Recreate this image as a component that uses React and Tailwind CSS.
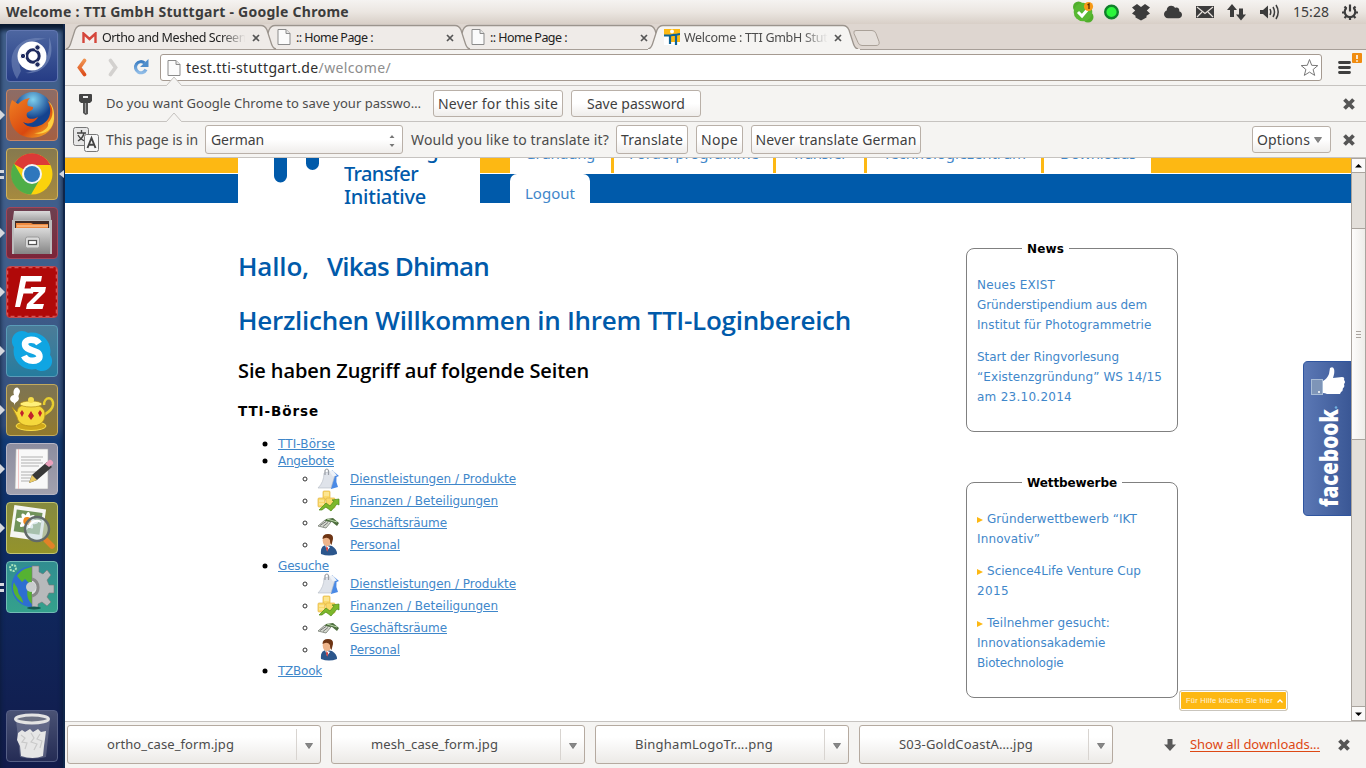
import { useLayoutEffect, useRef, useState } from "react";
import { FaCloud, FaSkype } from "react-icons/fa";

/* Text whose tracking is adjusted so that it fills a slot of the given width. */
function Fit({ w, className = "", children }) {
  const ref = useRef(null);
  const [gap, setGap] = useState(0);
  useLayoutEffect(() => {
    const natural = ref.current.getBoundingClientRect().width;
    const count = ref.current.textContent.length;
    setGap((w - natural) / count);
  }, [w]);
  return (
    <span ref={ref} className={`inline-block whitespace-pre ${className}`} style={{ letterSpacing: `${gap}px` }}>
      {children}
    </span>
  );
}

/* ---------- top panel ---------- */

function TopPanel() {
  return (
    <header className="flex h-6 shrink-0 items-center bg-linear-to-b from-[#f5f3f1] via-[#ebe6e1] to-[#d8cfc7] text-[#3c3c3c]">
      <div className="flex-1 pl-[6px] text-[14px] leading-6 font-bold">
        <Fit w={343}>Welcome : TTI GmbH Stuttgart - Google Chrome</Fit>
      </div>
      <svg width="293" height="24" viewBox="0 0 293 24" className="-mr-[72px] shrink-0">
        <circle cx="6.500" cy="7" r="5.500" fill="#4fae2b" />
        <circle cx="16" cy="17" r="5.500" fill="#4fae2b" />
        <circle cx="11" cy="12" r="9.300" fill="#58b832" />
        <path d="M6 12l4 4 6-7" fill="none" stroke="#fff" strokeWidth="3" />
        <circle cx="16.500" cy="6.500" r="4.600" fill="#f79a16" />
        <path d="M15.500 5l1.500-1v5" fill="none" stroke="#5a2a00" strokeWidth="1.300" />
        <circle cx="39.500" cy="12" r="6.300" fill="#2cf53c" stroke="#10802a" strokeWidth="2.400" />
        <path d="M65 4l4 3 4-3 5 3.500-3.200 3 3.200 3-3.500 2.300v1.700L69 20.500l-5.500-3v-1.700L60 13.500l3.200-3L60 7.500z" fill="#3c3c3c" />
        <g transform="translate(92 3)"><FaCloud size={18} color="#3c3c3c" /></g>
        <rect x="124" y="6" width="18" height="12" fill="#3c3c3c" />
        <path d="M125 7l8 6.500L141 7M125 17l5-5M141 17l-5-5" fill="none" stroke="#e8e2dd" strokeWidth="1.200" />
        <path d="M160 4l5 6h-3v7h-4v-7h-3zM169 20.500l-5-6h3V8.500h4v6h3z" fill="#3c3c3c" />
        <path d="M188 10h3l5-4.500v13L191 14h-3z" fill="#3c3c3c" />
        <path d="M198 9q1.600 3 0 6M201 7q3 5 0 10M204 5q4.400 7 0 14" fill="none" stroke="#3c3c3c" strokeWidth="1.500" />
      </svg>
      <div className="w-[36px] text-[14px] leading-6"><Fit w={36}>15:28</Fit></div>
      <svg width="37" height="24" viewBox="0 0 37 24" className="shrink-0">
        <g fill="none" stroke="#3c3c3c" strokeWidth="2.200">
          <path d="M17.500 7.800a5.300 5.300 0 1 0 7 0M21 4.500v7" />
          <path d="M13 12.500h3M26 12.500h3M15.500 18l2-2M26.500 18l-2-2M21 17v3M15.500 6.500l2 2M26.500 6.500l-2 2" />
        </g>
      </svg>
    </header>
  );
}

/* ---------- launcher ---------- */

function Tile({ className, pips = "", children }) {
  return (
    <div className="flex h-[52px] w-[65px] shrink-0 items-center">
      <svg width="6" height="14" viewBox="0 0 6 14" fill="#d5d8de">
        {pips.includes("one") && <path d="M0 2l5 5-5 5z" />}
        {pips.includes("many") && <path d="M0 3h4v3H0zM0 9h4v3H0z" />}
      </svg>
      <div className={`h-[52px] w-[52px] overflow-hidden rounded-[4px] border ${className}`}>
        <svg width="50" height="50" viewBox="0 0 50 50">{children}</svg>
      </div>
      <svg width="7" height="14" viewBox="0 0 7 14" fill="#d5d8de">
        {pips.includes("active") && <path d="M6 3L1 7l5 4z" />}
      </svg>
    </div>
  );
}

function Launcher() {
  return (
    <nav className="flex w-[65px] shrink-0 flex-col gap-[7px] border-r-2 border-[#10264a] bg-[linear-gradient(to_bottom,#405f8b_0%,#405e8b_35%,#334e7c_54%,#123a74_56%,#0e2c63_68%,#121b4b_100%)] pt-[6px] pb-[6px] shadow-[inset_0_6px_5px_#0a1a30]">
      <Tile className="border-[#6176b0] bg-linear-to-b from-[#4d66a0] to-[#263c85]">
        <path d="M10 48C-4 26 10 2 40 8C20 8 8 22 14 40z" fill="#7d91bf" opacity=".5" />
        <path d="M42 6c8 20-4 38-24 36c16-2 26-14 24-36z" fill="#8b9fca" opacity=".5" />
        <circle cx="25" cy="25" r="14.500" fill="#fff" />
        <circle cx="26" cy="25" r="6.200" fill="none" stroke="#1f2b5f" strokeWidth="3" />
        <g fill="#1f2b5f" stroke="#fff" strokeWidth="1">
          <circle cx="16" cy="25" r="2.700" /><circle cx="30.500" cy="16.500" r="2.700" /><circle cx="30.500" cy="33.500" r="2.700" />
        </g>
      </Tile>
      <Tile pips="one" className="border-[#c98665] bg-linear-to-b from-[#8c6c66] to-[#a45f42]">
        <defs>
          <radialGradient id="ffGlobe" cx=".5" cy=".2"><stop offset="0" stopColor="#7fd0ee" /><stop offset="1" stopColor="#14428e" /></radialGradient>
          <linearGradient id="ffFur" x1="0" y1="0" x2="1" y2="1"><stop offset="0" stopColor="#f08022" /><stop offset=".6" stopColor="#d9480f" /><stop offset="1" stopColor="#fbc52c" /></linearGradient>
        </defs>
        <circle cx="26" cy="21" r="19" fill="url(#ffGlobe)" />
        <path d="M5 10l6 4c3-3 6-5 12-6c-3 3-3 6-2 8l5 1c1 3-4 4-6 6c-2 5 4 8 11 4c-3 6-10 8-15 5c4 7 18 7 25-3c4-6 2-15-1-19c9 8 10 23 2 31c-9 9-26 9-34-1C1 32 1 19 5 10z" fill="url(#ffFur)" />
        <path d="M41 11c6 7 6 16 0 22c2 5-8 11-14 10c12 3 21-5 20-18c0-6-2-11-6-14z" fill="#fdcf41" />
      </Tile>
      <Tile pips="many active" className="border-[#d0b15c] bg-linear-to-b from-[#86794e] to-[#a68a3e]">
        <circle cx="25" cy="25" r="20.500" fill="#fbd20c" />
        <path d="M25 25L7 15A20.500 20.500 0 0 1 43.500 16H25z" fill="#dc3a37" />
        <path d="M7 14.500A20.500 20.500 0 0 0 24 45.500l9-15.500H16z" fill="#4fae47" />
        <circle cx="25" cy="25" r="10" fill="#f3f5f6" />
        <circle cx="25" cy="25" r="8" fill="#2e77bd" />
      </Tile>
      <Tile pips="one" className="border-[#a2465a] bg-linear-to-b from-[#6d4050] to-[#7c2439]">
        <defs><linearGradient id="steel" x1="0" y1="0" x2="0" y2="1"><stop offset="0" stopColor="#dadada" /><stop offset="1" stopColor="#858585" /></linearGradient></defs>
        <path d="M7 3h36l2 15H5z" fill="url(#steel)" />
        <path d="M5 12h40v34H5z" fill="#bcbcbc" />
        <path d="M8 13h34v8H8z" fill="#422b24" />
        <path d="M9 15h15l2 1h15v5H9z" fill="#f08b40" />
        <path d="M10 18h31" stroke="#ffd9b2" />
        <path d="M7 20h36v26H7z" fill="url(#steel)" />
        <rect x="18.500" y="29" width="14" height="11" rx="2" fill="#dadada" stroke="#999" />
        <rect x="21.500" y="32.500" width="8" height="4" fill="#fff" stroke="#555" strokeWidth="1.200" />
      </Tile>
      <Tile pips="one" className="border-[#c24b51] bg-[#b00909]">
        <rect x=".5" y=".5" width="49" height="49" fill="none" stroke="#d45555" strokeWidth="1.500" strokeDasharray="4 3" />
        <path d="M14 9h21l-1 5.500H19l-1.500 7H27l-1 5h-9.500L13 40H8z" fill="#fff" />
        <path d="M24 20h15l-1 5-12 12h11l-1.500 5H19l1-5 12-12h-9z" fill="#fff" />
      </Tile>
      <Tile pips="one" className="border-[#5a9cb8] bg-linear-to-b from-[#4b7c98] to-[#247c9e]">
        <g transform="translate(2 2)"><FaSkype size={46} color="#10a5e2" /></g>
        <circle cx="25" cy="25" r="16" fill="#10a5e2" />
        <path d="M32 17.500c-3-5-14-5-14 .5c0 8 14.500 5 14.500 12.500c0 5.500-12.500 6-15.500-.5" fill="none" stroke="#fff" strokeWidth="6.500" />
      </Tile>
      <Tile pips="one" className="border-[#c2aa5e] bg-linear-to-b from-[#7d7452] to-[#91792c]">
        <path d="M7 18c-7-3-3-8 0-8c-2-6 3-10 5-6c3 3-2 6 0 9c0 4-5 4-5 8z" fill="#fff" />
        <path d="M37 20c0-9 10-9 9 0c-1 7-9 9-12 12" fill="none" stroke="#e6cd30" strokeWidth="2.500" />
        <ellipse cx="24" cy="41" rx="15" ry="4.500" fill="#d0a81b" stroke="#fae04a" />
        <path d="M5 22l5 5c1-6 4-7 14-8c10 1 14 5 14 10c0 9-6 12-14 12s-13-3-14-9z" fill="#f5d83c" stroke="#b18c18" strokeWidth=".8" />
        <ellipse cx="24" cy="19" rx="11" ry="3" fill="#fff07a" stroke="#b18c18" strokeWidth=".7" />
        <circle cx="24" cy="15" r="3" fill="#f5dc4b" />
        <path d="M15 25l2 3-2 4-2-4zM24 26l3 5-3 4-3-4zM33 25l2 3-2 4-2-4z" fill="#c2202c" />
      </Tile>
      <Tile pips="one" className="border-[#b7b6c5] bg-linear-to-b from-[#8c8d9f] to-[#a2a1ae]">
        <path d="M9 5h32v40H8z" fill="#f8f8f8" stroke="#aaa" strokeWidth=".6" />
        <path d="M11.500 5v40" stroke="#f2b1b1" strokeWidth=".7" />
        <path d="M14 13h22M14 16h20M14 19h22M14 22h18M14 28h15M14 31h12M14 34h10M14 37h9" stroke="#b0b0b0" strokeWidth="1" />
        <path d="M22 39l3-8 15-13 5 5-15 13z" fill="#383838" />
        <path d="M22 39l3-8 5 5z" fill="#e8c863" />
        <path d="M38 20l4-4c2-1 5 2 4 4l-4 3z" fill="#e9a0bc" />
      </Tile>
      <Tile pips="one" className="border-[#c3c471] bg-linear-to-b from-[#858a3f] to-[#94932a]">
        <g transform="rotate(8 20 20)">
          <rect x="5" y="4" width="32" height="32" fill="#f6f6f2" />
          <rect x="8" y="8" width="26" height="22" fill="#71935a" />
          <g fill="#fff"><ellipse cx="20" cy="18" rx="11" ry="3" /><ellipse cx="20" cy="18" rx="3" ry="9" /><ellipse cx="20" cy="18" rx="3" ry="9" transform="rotate(45 20 18)" /><ellipse cx="20" cy="18" rx="3" ry="9" transform="rotate(-45 20 18)" /></g>
          <circle cx="20" cy="18" r="4" fill="#f08a1d" />
        </g>
        <path d="M39 37l6 6" stroke="#e28227" strokeWidth="5.500" strokeLinecap="round" />
        <circle cx="30" cy="26" r="12" fill="#cbdde4" fillOpacity=".6" stroke="#626a68" strokeWidth="2.500" />
        <path d="M22 25a8 8 0 0 1 12-6" fill="none" stroke="#fff" strokeWidth="2" />
      </Tile>
      <Tile pips="many" className="border-[#72bdb5] bg-linear-to-b from-[#318d90] to-[#34a18c]">
        <path d="M25 4a20 20 0 0 0 0 41z" fill="#2d6ed1" />
        <path d="M25 5c-7 1-12 4-15 9l5 6 3-3 4 4-3 4 6-2zM7 20c1 4 4 5 4 9s5 6 5 12C8 36 4 28 7 20zM21 27l4 3v12c-4-3-6-10-4-15z" fill="#55b232" />
        <path d="M25 4h7v6l4 2 4-4 4 5-4 5 2 5h5v8h-5l-2 4 4 5-4 4-5-4-4 2v5h-6z" fill="#b7b9bb" stroke="#777" strokeWidth=".6" />
        <path d="M25 17a9 9 0 0 1 0 17" fill="#dfe1e2" stroke="#888" strokeWidth="3" />
        <circle cx="24" cy="25" r="5" fill="#c9cccd" />
        <circle cx="6" cy="6" r="3" fill="none" stroke="#a9e3bb" strokeWidth="2" strokeDasharray="2 1" />
        <ellipse cx="27" cy="46" rx="7" ry="1.500" fill="#155a52" />
      </Tile>
      <div className="mt-auto">
        <Tile className="border-[#565f85] bg-linear-to-b from-[#4a5274] to-[#252c55]">
          <path d="M9 9l4 37q13 3 26 0l4-37z" fill="#a5aabd" fillOpacity=".35" />
          <path d="M11 22l4-3 3 2 5-3 3 3 5-3 3 3 5-1-1 8-1 7-1 10q-10 4-22 0l-1-10-3-6z" fill="#e6e6e6" />
          <path d="M14 24l4 3-3 4 5 1-2 6M24 22l3 5-3 4 6 2-3 6M33 23l-3 5 5 2-2 7" fill="none" stroke="#c9c9c9" strokeWidth="1.200" />
          <ellipse cx="25" cy="8" rx="16.500" ry="4" fill="#6c7183" stroke="#e3e3e3" strokeWidth="3" />
        </Tile>
      </div>
    </nav>
  );
}

/* ---------- browser chrome ---------- */

function PageIcon({ className = "" }) {
  return (
    <svg width="14" height="16" viewBox="0 0 14 16" className={`shrink-0 ${className}`}>
      <path d="M1 .5h8l4 4v11H1z" fill="#fbfbfb" stroke="#8b8b8b" />
      <path d="M9 .5v4h4" fill="#e5e5e5" stroke="#8b8b8b" />
    </svg>
  );
}

function Tab({ icon, title, width, active, fade, z }) {
  return (
    <div className={`relative h-[26px] w-[194px] shrink-0 ${z}`}>
      <svg width="212" height="26" viewBox="0 0 212 26" className="absolute top-0 left-0">
        <path
          d="M0 25Q3 24.500 4.500 20L9 6Q11 1.500 15 1.500H195Q199 1.500 201 6L205.500 20Q207 24.500 210 25"
          fill={active ? "#f5f4f2" : "#efebe8"}
          stroke="#9b948d"
          strokeWidth="1.300"
        />
        {active && <path d="M0 25.500h212" stroke="#f5f4f2" />}
      </svg>
      <div className="relative flex h-[26px] items-center pl-[16px]">
        <div className="flex w-[20px] items-center">{icon}</div>
        <div className={`w-[148px] overflow-hidden pt-px text-[12.500px] leading-[27px] ${active ? "text-[#4c4c4c]" : "text-[#222]"} ${fade ? "[mask-image:linear-gradient(to_right,black_80%,transparent_97%)]" : ""}`}>
          <Fit w={width}>{title}</Fit>
        </div>
        <svg width="8" height="8" viewBox="0 0 8 8" className="mt-[2px] ml-[2px]">
          <path d="M1 1l6 6M7 1L1 7" stroke="#555" strokeWidth="1.700" />
        </svg>
      </div>
    </div>
  );
}

function TabStrip() {
  const gmail = (
    <svg width="15" height="12" viewBox="0 0 15 12" className="mt-px">
      <path d="M1 .5h13v10.500H1z" fill="#f4f0ee" />
      <path d="M1.500 11V1.500L7.500 7l6-5.500V11" fill="none" stroke="#d5463b" strokeWidth="2.400" />
    </svg>
  );
  const tti = (
    <svg width="16" height="16" viewBox="0 0 16 16">
      <path d="M0 0h16v13H0z" fill="#fdb913" />
      <path d="M0 7h5v9H0zM0 13h16v3H0z" fill="#fff" />
      <circle cx="8" cy="2.500" r="2" fill="#fff" />
      <path d="M0 6.500h4q4 0 12-1.500M6 6v9M12 6v10" stroke="#0d6497" strokeWidth="2.200" fill="none" />
    </svg>
  );
  return (
    <div className="flex h-[26px] shrink-0 border-b border-[#a79f98] bg-[#ded6d0] pl-px">
      <Tab z="z-30" icon={gmail} title="Ortho and Meshed Screen" width={144} fade />
      <Tab z="z-20" icon={<PageIcon className="ml-px" />} title=":: Home Page :" width={77} />
      <Tab z="z-10" icon={<PageIcon className="ml-px" />} title=":: Home Page :" width={77} />
      <Tab z="z-40" icon={tti} title="Welcome : TTI GmbH Stuttg" width={155} active fade />
      <svg width="30" height="26" viewBox="0 0 30 26" className="ml-[10px]">
        <path d="M4 6.500h16q3 0 4 3l3 8q1 4-3 4H10q-3 0-4-3L2 9.500q-1-3 2-3z" fill="#e5dfda" stroke="#aaa198" />
      </svg>
    </div>
  );
}

function Toolbar() {
  return (
    <div className="flex h-9 shrink-0 items-center border-b border-[#c6c3c0] bg-[#f5f4f2]">
      <svg width="95" height="35" viewBox="0 0 95 35" className="shrink-0" fill="none">
        <defs>
          <linearGradient id="back" x1="0" y1="0" x2="0" y2="1"><stop offset="0" stopColor="#ef9150" /><stop offset="1" stopColor="#dd4f1c" /></linearGradient>
          <linearGradient id="reload" x1="0" y1="0" x2="0" y2="1"><stop offset="0" stopColor="#3d7fc4" /><stop offset="1" stopColor="#8ebbe6" /></linearGradient>
        </defs>
        <path d="M19.500 10.500L14.500 17.500L19.500 24.500" stroke="url(#back)" strokeWidth="3.800" strokeLinecap="round" />
        <path d="M45.500 10.500L50.500 17.500L45.500 24.500" stroke="#d3d1cf" strokeWidth="3.800" strokeLinecap="round" />
        <path d="M79.500 13A5.500 5.500 0 1 0 81 19.500" stroke="url(#reload)" strokeWidth="3.200" />
        <path d="M75 17h8.500v-8z" fill="#4e8dcb" />
      </svg>
      <div className="flex h-[27px] w-[1162px] items-center rounded-[3px] border border-[#a59a91] bg-white pr-[2px] pl-[6px] text-[14px] leading-[25px]">
        <PageIcon className="mr-[5px]" />
        <Fit w={205} className="text-[#2e2e2e]">
          test.tti-stuttgart.de<span className="text-[#8d8d8d]">/welcome/</span>
        </Fit>
        <svg width="19" height="19" viewBox="0 0 19 19" className="ml-auto">
          <path d="M9.500 1.500l2.200 5.800 6.100.3-4.700 3.900 1.600 5.900-5.200-3.300-5.200 3.300 1.600-5.900L1.200 7.600l6.100-.3z" fill="#fff" stroke="#777" />
        </svg>
      </div>
      <svg width="44" height="35" viewBox="0 0 44 35">
        <path d="M17.500 12.500h10M17.500 17.500h10M17.500 22.500h10" stroke="#3e3e3e" strokeWidth="2.800" strokeLinecap="round" />
        <rect x="30" y="3" width="10" height="10" rx="1" fill="#f08c10" />
        <path d="M35 5v4M35 10.300v1.400" stroke="#fff" strokeWidth="1.600" />
      </svg>
    </div>
  );
}

function Notch() {
  return (
    <svg width="18" height="11" viewBox="0 0 18 11" className="absolute -top-[10px] left-[100px]">
      <path d="M1 10L9 1l8 9v1H1z" fill="#f5f4f2" />
      <path d="M0 9.500h1.500L9 1l7.500 8.500H18" fill="none" stroke="#c6c3c0" />
    </svg>
  );
}

function CloseMark() {
  return (
    <svg width="14" height="14" viewBox="0 0 14 14">
      <path d="M2.500 2.500l9 9M11.500 2.500l-9 9" stroke="#555" strokeWidth="3.800" />
    </svg>
  );
}

function Button({ className, w, children }) {
  return (
    <div className={`flex items-center justify-center rounded-[3px] border border-[#b9b0a8] bg-linear-to-b from-white from-50% to-[#efedeb] leading-[25px] text-[#3f3f3f] ${className}`}>
      <Fit w={w}>{children}</Fit>
    </div>
  );
}

function PasswordBar() {
  return (
    <div className="relative flex h-9 shrink-0 items-center border-b border-[#c6c3c0] bg-[#f5f4f2] text-[14px] text-[#4c4c4c]">
      <Notch />
      <svg width="41" height="35" viewBox="0 0 41 35">
        <path d="M15 8h11q1 0 1 1v6l-2 2H16l-2-2V9q0-1 1-1z" fill="#444" />
        <path d="M18 17h5v11l-2.500 1-2.500-2z" fill="#555" />
        <path d="M18 11h5" stroke="#eee" strokeWidth="2" />
        <path d="M20.500 17v10" stroke="#999" />
      </svg>
      <Fit w={315} className="pt-px text-[13px]">Do you want Google Chrome to save your passwo…</Fit>
      <Button className="ml-[12px] h-[27px] w-[130px]" w={120}>Never for this site</Button>
      <Button className="ml-[8px] h-[27px] w-[130px]" w={98}>Save password</Button>
      <div className="mr-[10px] ml-auto"><CloseMark /></div>
    </div>
  );
}

function TranslateBar() {
  return (
    <div className="relative flex h-9 shrink-0 items-center border-b border-[#c6c3c0] bg-[#f5f4f2] text-[14px] text-[#4c4c4c]">
      <Notch />
      <svg width="41" height="35" viewBox="0 0 41 35">
        <rect x="8.500" y="5.500" width="15" height="18" rx="2" fill="#e7e7e7" stroke="#777" />
        <path d="M12 11h9M16.500 8v3M13 19q5-3 6-8M13 13q3 5 7 6" stroke="#444" strokeWidth="1.400" fill="none" />
        <rect x="19.500" y="12.500" width="14" height="17" rx="2" fill="#f6f6f6" stroke="#777" />
        <path d="M22.500 26L26.500 16L30.500 26M24 22.800h5" stroke="#444" strokeWidth="1.900" fill="none" />
      </svg>
      <Fit w={92}>This page is in</Fit>
      <div className="ml-[7px] flex h-[29px] w-[198px] items-center rounded-[3px] border border-[#b9b0a8] bg-linear-to-b from-white from-50% to-[#efedeb] pr-[6px] pl-[5px] text-[#3f3f3f]">
        <Fit w={53}>German</Fit>
        <svg width="8" height="14" viewBox="0 0 8 14" className="mt-[3px] ml-auto" fill="#777"><path d="M1.500 4L4 1l2.500 3zM1.500 10L4 13l2.500-3z" /></svg>
      </div>
      <Fit w={198} className="ml-[8px]">Would you like to translate it?</Fit>
      <Button className="ml-[7px] h-[29px] w-[72px]" w={62}>Translate</Button>
      <Button className="ml-[8px] h-[29px] w-[47px]" w={37}>Nope</Button>
      <Button className="ml-[8px] h-[29px] w-[170px]" w={161}>Never translate German</Button>
      <div className="ml-auto flex h-[27px] w-[79px] items-center justify-between rounded-[3px] border border-[#b9b0a8] bg-linear-to-b from-white from-50% to-[#efedeb] pr-[8px] pl-[4px] text-[#3f3f3f]">
        <Fit w={53}>Options</Fit>
        <svg width="8" height="6" viewBox="0 0 8 6"><path d="M.5.500h7L4 5.500z" fill="#888" stroke="#666" strokeWidth=".7" /></svg>
      </div>
      <div className="mr-[10px] ml-[11px]"><CloseMark /></div>
    </div>
  );
}

/* ---------- web page ---------- */

const NAV = [
  ["Gründung", 70, "w-[104px] pl-[15px]"],
  ["Förderprogramme", 130, "w-[162px] pl-[15px]"],
  ["Transfer", 55, "w-[91px] pl-[16px]"],
  ["Technologiezentrum", 143, "w-[177px] pl-[16px]"],
  ["Downloads", 76, "w-[107px] pl-[16px]"],
];

function SiteHeader() {
  return (
    <div className="flex h-[45px]">
      <div className="flex w-[173px] flex-col gap-px">
        <div className="h-[15px] bg-[#fdb813]" />
        <div className="h-[29px] bg-[#005aaa]" />
      </div>
      <div className="flex w-[242px]">
        <svg width="106" height="45" viewBox="0 0 106 45" fill="#005aaa">
          <path d="M36 0h13v18a6.500 6.500 0 0 1-13 0zM68 0h13v5.500a6.500 6.500 0 0 1-13 0z" />
        </svg>
        <div className="h-[53px] overflow-hidden text-[20px] leading-[23px] font-medium text-[#005aaa]">
          <div className="-mt-[19px]"><Fit w={110}>Technologie</Fit></div>
          <div><Fit w={74}>Transfer</Fit></div>
          <div><Fit w={82}>Initiative</Fit></div>
        </div>
      </div>
      <div className="flex flex-1 flex-col gap-px text-[15px] text-[#3f87ca]">
        <div className="flex h-[15px] overflow-hidden bg-[#fdb813] pl-[30px]">
          {NAV.map(([label, w, cls], i) => (
            <div key={label} className={`h-[15px] bg-white ${i < 4 ? "border-r-3 border-[#fdb813]" : ""} ${cls}`}>
              <div className="-mt-[15px] leading-[20px]"><Fit w={w}>{label}</Fit></div>
            </div>
          ))}
        </div>
        <div className="h-[29px] bg-[#005aaa] pl-[30px]">
          <div className="h-[29px] w-[80px] rounded-t-[7px] bg-white pl-[15px] leading-[38px]"><Fit w={50}>Logout</Fit></div>
        </div>
      </div>
    </div>
  );
}

function ServiceIcon() {
  return (
    <svg width="24" height="22" viewBox="0 0 24 22">
      <path d="M15 2l7 6-2.500 1q-1 5 1.500 10l-7 2z" fill="#4a8ae6" />
      <path d="M7 5l9-2 2 4-4 13H1q6-6 6-15z" fill="#dfe3ea" stroke="#b4bac4" strokeWidth=".6" />
      <path d="M12 3l4-.5 4 5-4 1z" fill="#eef2f8" />
      <path d="M8 7V2.500q2-3 3.500 0V7" fill="none" stroke="#9a9ea5" strokeWidth="1.200" />
    </svg>
  );
}
function FinanceIcon() {
  return (
    <svg width="24" height="22" viewBox="0 0 24 22">
      <g fill="#fbd96a" stroke="#e2b544" strokeWidth=".7">
        <rect x="6" y="1" width="7" height="9" rx="1" /><rect x="1" y="8" width="7" height="9" rx="1" /><rect x="9" y="8" width="9" height="10" rx="1" />
      </g>
      <path d="M7 3h5M7 5h5M2 11h5M2 14h5" stroke="#fff2b8" />
      <path d="M2 20l7-7 4 3 4-5-2-1 7-1v6l-2-1-6 7-5-4-4 3z" fill="#7cb82b" stroke="#4e8a17" strokeWidth=".7" />
    </svg>
  );
}
function RoomsIcon() {
  return (
    <svg width="24" height="22" viewBox="0 0 24 22">
      <path d="M1 14l7-6 6 2-5 6z" fill="#d5d9d0" stroke="#737a70" strokeWidth=".8" />
      <path d="M3 13.500l6-4M6 14.500l5-4" stroke="#777" strokeWidth="1" />
      <path d="M9 7l7-1 6 5-2 3-5-4-7-1z" fill="#4e6e3e" />
      <path d="M10 7l10 3" stroke="#b9d6a7" strokeWidth="1" />
    </svg>
  );
}
function PersonIcon() {
  return (
    <svg width="24" height="22" viewBox="0 0 24 22">
      <path d="M4 20q-1-9 6-9l5 1q5 3 5 8-8 3-16 0z" fill="#2b568c" />
      <path d="M8 11l2 6 3-4z" fill="#fff" />
      <path d="M9.500 12l1.500 2-.5 4-1.500-3z" fill="#c93434" />
      <ellipse cx="10" cy="6.500" rx="4.300" ry="5.500" fill="#eeb48a" />
      <path d="M5.500 5q0-5 5.500-5t5 5l-1.500 6q-1.500-1-1.500-5-2-3-5-2z" fill="#6e3514" />
    </svg>
  );
}

const GROUP = [
  [ServiceIcon, "Dienstleistungen / Produkte", 166],
  [FinanceIcon, "Finanzen / Beteiligungen", 148],
  [RoomsIcon, "Geschäftsräume", 97],
  [PersonIcon, "Personal", 50],
];

function TopItem({ className, w, children }) {
  return (
    <div className={`flex ${className}`}>
      <svg width="40" height="18" viewBox="0 0 40 18" className="shrink-0"><circle cx="27" cy="9" r="2.500" fill="#000" /></svg>
      <a className="leading-[18px] text-[#3f87ca]"><Fit w={w} className="underline underline-offset-1">{children}</Fit></a>
    </div>
  );
}

function SubList() {
  return GROUP.map(([Icon, label, w]) => (
    <div key={label} className="flex h-[22px] pl-[40px]">
      <svg width="39" height="22" viewBox="0 0 39 22" className="shrink-0"><circle cx="27" cy="11" r="2" fill="none" stroke="#333" /></svg>
      <Icon />
      <a className="pl-[9px] leading-[22px] text-[#3f87ca]"><Fit w={w} className="underline underline-offset-1">{label}</Fit></a>
    </div>
  ));
}

function Box({ title, titleW, className, children }) {
  return (
    <fieldset className={`w-[212px] rounded-[8px] border border-[#808080] px-[10px] text-[12px] leading-[20px] text-[#3f87ca] ${className}`}>
      <legend className="ml-[45px] h-[14px] px-[5px] leading-[16px] font-bold text-black"><Fit w={titleW}>{title}</Fit></legend>
      {children}
    </fieldset>
  );
}

function Lines({ rows, marker }) {
  return (
    <p className="mb-[12px]">
      {rows.map(([text, w], i) => (
        <span key={text} className="flex h-[20px] items-center">
          {marker && i === 0 && (
            <svg width="10" height="8" viewBox="0 0 10 8"><path d="M0 2l6 3-6 3z" fill="#fdb813" /></svg>
          )}
          <Fit w={w}>{text}</Fit>
        </span>
      ))}
    </p>
  );
}

function Page() {
  return (
    <div className="relative h-full w-[1286px] overflow-hidden bg-white font-['DejaVu_Sans',sans-serif]">
      <div className="font-['Noto_Sans',sans-serif]"><SiteHeader /></div>
      <div className="flex">
        <main className="w-[728px] shrink-0 pl-[173px]">
          <div className="w-[640px] font-['Open_Sans',sans-serif]">
            <h1 className="mt-[45px] flex h-[36px] gap-[18px] text-[26px] leading-[36px] font-semibold text-[#005aaa]">
              <Fit w={71}>Hallo,</Fit>
              <Fit w={162}>Vikas Dhiman</Fit>
            </h1>
            <h1 className="mt-[18px] h-[36px] text-[26px] leading-[36px] font-semibold text-[#005aaa]"><Fit w={613}>Herzlichen Willkommen in Ihrem TTI-Loginbereich</Fit></h1>
            <h2 className="mt-[18px] h-[30px] text-[20px] leading-[30px] font-semibold text-black"><Fit w={351}>Sie haben Zugriff auf folgende Seiten</Fit></h2>
          </div>
          <h3 className="mt-[15px] h-[20px] text-[13.500px] leading-[20px] font-bold text-black"><Fit w={81}>TTI-Börse</Fit></h3>
          <div className="mt-[14px] text-[12px]">
            <TopItem className="h-[17px]" w={57}>TTI-Börse</TopItem>
            <TopItem className="h-[16px]" w={56}>Angebote</TopItem>
            <SubList />
            <TopItem className="h-[17px] pt-px" w={51}>Gesuche</TopItem>
            <SubList />
            <TopItem className="h-[17px] pt-px" w={44}>TZBook</TopItem>
          </div>
        </main>
        <aside className="pt-[38px] pl-[173px]">
          <Box title="News" titleW={37} className="h-[191px] pt-[20px]">
            <Lines rows={[["Neues EXIST", 78], ["Gründerstipendium aus dem", 170], ["Institut für Photogrammetrie", 174.5]]} />
            <Lines rows={[["Start der Ringvorlesung", 142], ["“Existenzgründung” WS 14/15", 185], ["am 23.10.2014", 95]]} />
          </Box>
          <Box title="Wettbewerbe" titleW={90} className="mt-[43px] h-[223px] pt-[20px]">
            <Lines marker rows={[["Gründerwettbewerb “IKT", 150], ["Innovativ”", 63]]} />
            <Lines marker rows={[["Science4Life Venture Cup", 154], ["2015", 32]]} />
            <Lines marker rows={[["Teilnehmer gesucht:", 123], ["Innovationsakademie", 128.5], ["Biotechnologie", 86.5]]} />
          </Box>
        </aside>
      </div>
      <svg width="48" height="155" viewBox="0 0 48 155" className="absolute top-[203px] right-0">
        <defs><linearGradient id="fb"><stop offset="0" stopColor="#5b78b5" /><stop offset="1" stopColor="#3a5795" /></linearGradient></defs>
        <path d="M48 .5H5Q.5.500.5 5v145q0 4.500 4.500 4.500h43z" fill="url(#fb)" stroke="#2f559f" />
        <rect x="8.500" y="18.500" width="11" height="15" fill="#7e95b8" stroke="#a9bdd6" />
        <circle cx="16" cy="31" r="1" fill="#fff" />
        <path d="M20 20q4-2 6-7l1-6q3-2 4 1t-1 9l9-1q3 0 2 3 2 2 0 4 1 3-1 4 0 3-2 4l-1 2H24q-2-1-4-1z" fill="#fff" />
        <text transform="translate(34.500 146) rotate(-90)" fontFamily="Open Sans, sans-serif" fontSize="25" fontWeight="800" fill="#fff" textLength="98" lengthAdjust="spacingAndGlyphs">facebook</text>
        <circle cx="33" cy="46.500" r="1.300" fill="#6fb0e0" />
      </svg>
      <div className="absolute top-[532px] left-[1114px] flex h-[21px] w-[109px] items-center rounded-[3px] border border-[#c9c5bd] bg-[#fdb813] pl-[6px] font-['Liberation_Sans',sans-serif] text-[7.5px] leading-[17px] text-white/85 shadow-[inset_0_0_0_1px_white]">
        <Fit w={87}>Für Hilfe klicken Sie hier</Fit>
        <svg width="8" height="6" viewBox="0 0 8 6" className="ml-[3px]"><path d="M1.500 4.500L4 2l2.500 2.500" fill="none" stroke="#fff" strokeWidth="1.300" /></svg>
      </div>
    </div>
  );
}

function Scrollbar() {
  return (
    <div className="flex w-[15px] flex-col border-x border-[#aaa49e] bg-[#e3dfda]">
      <svg width="13" height="15" viewBox="0 0 13 15"><rect width="13" height="15" fill="#fbfaf9" /><path d="M0 .5h13M0 14.500h13" stroke="#aaa49e" /><path d="M3 9.500L6.500 6l3.500 3.500z" fill="#000" /></svg>
      <div className="mt-[55px] flex h-[212px] items-center justify-center border-y border-[#aaa49e] bg-linear-to-r from-[#fdfcfb] to-[#eeece9]">
        <svg width="5" height="9" viewBox="0 0 5 9"><path d="M0 1.500h5M0 4.500h5M0 7.500h5" stroke="#aaa49e" /></svg>
      </div>
      <svg width="13" height="15" viewBox="0 0 13 15" className="mt-auto"><rect width="13" height="15" fill="#fbfaf9" /><path d="M0 .5h13M0 14.500h13" stroke="#aaa49e" /><path d="M3 6.500l3.500 3.500L10 6.500z" fill="#000" /></svg>
    </div>
  );
}

const FILES = [["ortho_case_form.jpg", 127], ["mesh_case_form.jpg", 127], ["BinghamLogoTr….png", 138], ["S03-GoldCoastA….jpg", 134]];

function Downloads() {
  return (
    <div className="flex h-[47px] shrink-0 items-center border-t border-[#c6c3c0] bg-[#f5f4f2] pb-px pl-[2px] text-[13px] text-[#4c4c4c]">
      <div className="flex gap-[10px]">
        {FILES.map(([name, w]) => (
          <div key={name} className="flex h-[39px] w-[254px] items-center rounded-[3px] border border-[#b5aaa0] bg-linear-to-b from-white from-30% to-[#eceae7] pr-[7px] pl-[39px]">
            <Fit w={w}>{name}</Fit>
            <div className="ml-auto h-[31px] w-px bg-[#d8d4d0]" />
            <svg width="8" height="6" viewBox="0 0 8 6" className="mt-[2px] ml-[8px]"><path d="M.5.500h7L4 5.500z" fill="#888" stroke="#666" strokeWidth=".7" /></svg>
          </div>
        ))}
      </div>
      <svg width="12" height="12" viewBox="0 0 12 12" className="ml-[51px]"><path d="M3.500 0h5v5.500H12L6 12 0 5.500h3.500z" fill="#5a5a5a" /></svg>
      <a className="ml-[14px] text-[#dd4814]"><Fit w={130} className="underline underline-offset-2">Show all downloads...</Fit></a>
      <div className="mr-[15px] ml-auto"><CloseMark /></div>
    </div>
  );
}

export default function App() {
  return (
    <div className="flex h-[768px] w-[1366px] flex-col overflow-hidden bg-white font-['Noto_Sans',sans-serif]">
      <TopPanel />
      <div className="flex min-h-0 flex-1">
        <Launcher />
        <div className="flex min-w-0 flex-1 flex-col">
          <TabStrip />
          <Toolbar />
          <PasswordBar />
          <TranslateBar />
          <div className="flex min-h-0 flex-1">
            <Page />
            <Scrollbar />
          </div>
          <Downloads />
        </div>
      </div>
    </div>
  );
}
